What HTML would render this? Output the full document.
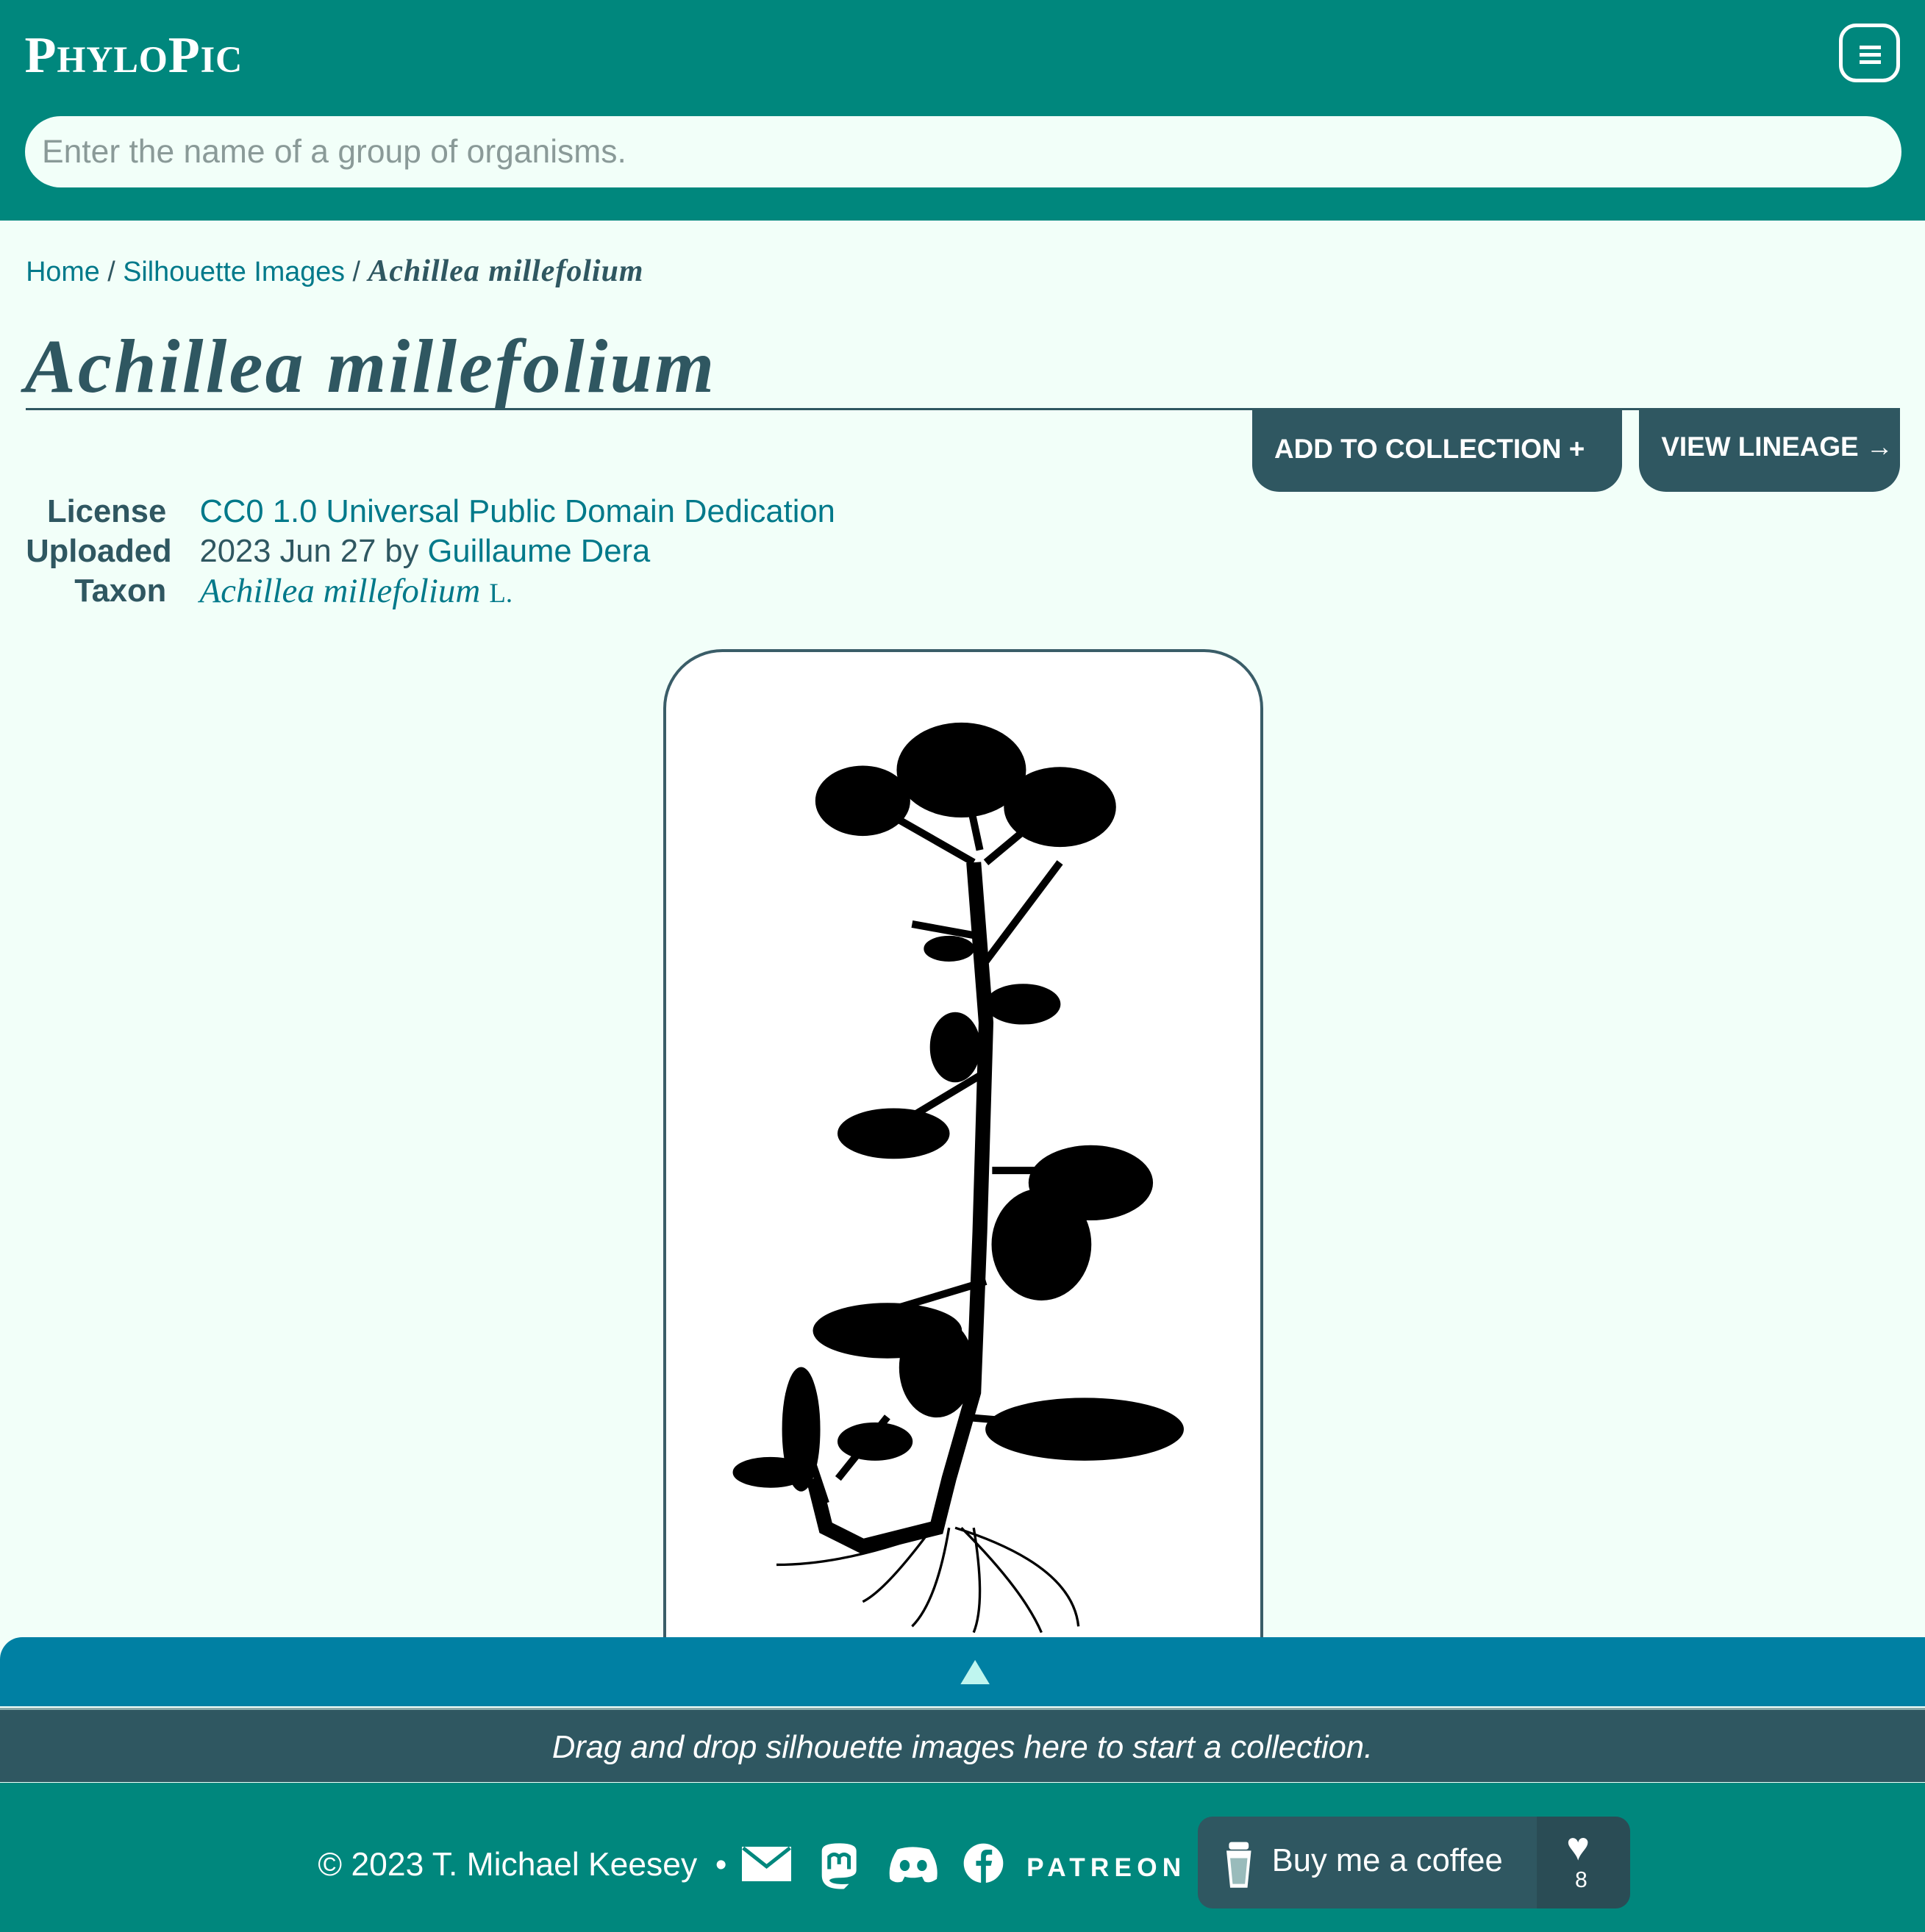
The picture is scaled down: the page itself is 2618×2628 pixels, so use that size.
<!DOCTYPE html>
<html><head><meta charset="utf-8"><style>
html,body{margin:0;padding:0}
body{width:1562px;height:1568px;zoom:1.67606;background:#f2fff9;font-family:"Liberation Sans",sans-serif;position:relative;overflow:hidden}
.hdr{position:absolute;left:0;top:0;width:1562px;height:179px;background:#00877d}
.logo{position:absolute;left:20px;top:21px;color:#fff;font-family:"Liberation Serif",serif;font-weight:bold;font-size:42px;letter-spacing:0.5px}
.logo small{font-size:30px}
.menu{position:absolute;left:1492px;top:19px;width:50px;height:48px;border:3px solid #fff;border-radius:14px;box-sizing:border-box}
.menu i{position:absolute;left:14px;width:17px;height:3px;background:#fff}
.search{position:absolute;left:20px;top:94px;width:1523px;height:58px;background:#f2fff9;border-radius:29px;color:#8a9a98;font-size:26.5px;line-height:58px;padding-left:14px;box-sizing:border-box}
a{color:#00798a;text-decoration:none}
.bc{position:absolute;left:21px;top:206px;font-size:22.5px;color:#2f5761}
.serif{font-family:"Liberation Serif",serif;font-style:italic;font-weight:bold;font-size:25px;letter-spacing:0.6px}
h1{position:absolute;left:20px;top:262px;margin:0;font-family:"Liberation Serif",serif;font-style:italic;font-weight:bold;font-size:62px;letter-spacing:1.8px;color:#2f5761}
.rule{position:absolute;left:21px;top:331px;width:1521px;height:2px;background:#2f5761}
.btn{position:absolute;top:333px;height:66px;background:#2f5761;color:#fff;font-weight:bold;font-size:22px;border-radius:0 0 22px 22px;box-sizing:border-box}
.meta{position:absolute;top:400px;font-size:26px;line-height:32px;color:#2f5761}
.card{position:absolute;left:538px;top:527px;width:487px;height:802px;border:2.5px solid #3a5d68;border-bottom:none;border-radius:48px 48px 0 0;background:#fff;box-sizing:border-box}
.bar{position:absolute;left:0;top:1329px;width:1562px;height:56px;background:#0080a3;border-radius:18px 0 0 0}
.drop{position:absolute;left:0;top:1386px;width:1562px;height:60px;background:#2f5761;color:#fff;font-style:italic;font-size:26px;text-align:center;line-height:62px;border-top:2px solid #8aa;box-sizing:border-box}
.foot{position:absolute;left:0;top:1447px;width:1562px;height:121px;background:#00877d;color:#fff}
</style></head><body>
<div class="hdr">
<div class="logo">P<small>HYLO</small>P<small>IC</small></div>
<div class="menu"><i style="top:15px"></i><i style="top:21px"></i><i style="top:27px"></i></div>
<div class="search">Enter the name of a group of organisms.</div>
</div>
<div class="bc"><a href="#">Home</a> / <a href="#">Silhouette Images</a> / <span class="serif">Achillea millefolium</span></div>
<h1>Achillea millefolium</h1>
<div class="rule"></div>
<div class="btn" style="left:1016px;width:300px;padding:19px 0 0 18px">ADD TO COLLECTION +</div>
<div class="btn" style="left:1330px;width:212px;padding:17px 0 0 18px">VIEW LINEAGE →</div>
<div class="meta" style="left:21px;width:114px;text-align:right;font-weight:bold">License<br>Uploaded<br>Taxon</div>
<div class="meta" style="left:162px"><a href="#">CC0 1.0 Universal Public Domain Dedication</a><br>2023 Jun 27 by <a href="#">Guillaume Dera</a><br><a href="#" style="font-family:'Liberation Serif',serif;font-style:italic;font-size:28px">Achillea millefolium</a> <span style="font-family:'Liberation Serif',serif;font-size:22px;color:#00798a">L.</span></div>
<div class="card"></div>
<svg style="position:absolute;left:590px;top:580px" width="390" height="750" viewBox="590 580 390 750">
<g fill="#000" stroke="#000">
<path d="M790 700 L800 830 L795 1000 L790 1130 L770 1200 L760 1240 L700 1255 L670 1240 L660 1200" fill="none" stroke-width="12"/>
<path d="M790 700 L720 660 M795 690 L780 620 M800 700 L860 650 M800 780 L860 700 M795 760 L740 750 M800 870 L700 930 M805 950 L900 950 M800 1040 L700 1070 M780 1150 L900 1160 M670 1220 L640 1130 M680 1200 L720 1150" stroke-width="6" fill="none"/>
<ellipse cx="700" cy="650" rx="38" ry="28"/><ellipse cx="780" cy="625" rx="52" ry="38"/><ellipse cx="860" cy="655" rx="45" ry="32"/>
<ellipse cx="830" cy="815" rx="30" ry="16"/><ellipse cx="725" cy="920" rx="45" ry="20"/><ellipse cx="775" cy="850" rx="20" ry="28"/>
<ellipse cx="885" cy="960" rx="50" ry="30"/><ellipse cx="845" cy="1010" rx="40" ry="45"/><ellipse cx="720" cy="1080" rx="60" ry="22"/>
<ellipse cx="760" cy="1110" rx="30" ry="40"/><ellipse cx="880" cy="1160" rx="80" ry="25"/><ellipse cx="650" cy="1160" rx="15" ry="50"/>
<ellipse cx="625" cy="1195" rx="30" ry="12"/><ellipse cx="710" cy="1170" rx="30" ry="15"/><ellipse cx="770" cy="770" rx="20" ry="10"/>
<path d="M760 1235 Q720 1290 700 1300 M770 1240 Q760 1300 740 1320 M780 1240 Q830 1290 845 1325 M775 1240 Q870 1270 875 1320 M765 1240 Q690 1270 630 1270 M790 1240 Q800 1300 790 1325" fill="none" stroke-width="2"/>
</g></svg>
<div class="bar"><svg style="position:absolute;left:779px;top:18px" width="24" height="20"><polygon points="12,0 24,20 0,20" fill="#bff5ef"/></svg></div>
<div class="drop">Drag and drop silhouette images here to start a collection.</div>
<div class="foot">
<div style="position:absolute;left:258px;top:52px;font-size:26.5px">© 2023 T. Michael Keesey&nbsp; •</div>
<svg style="position:absolute;left:602px;top:52px" width="40" height="28"><rect width="40" height="28" fill="#fff"/><path d="M1 1 L20 16 L39 1" fill="none" stroke="#00877d" stroke-width="3"/></svg>
<svg style="position:absolute;left:663px;top:47px" width="36" height="40"><path d="M4 8 Q4 2 18 2 Q32 2 32 8 L32 24 Q32 30 18 30 Q12 30 10 32 Q12 36 26 35 L22 39 Q4 40 4 28Z" fill="#fff"/><path d="M10 23 V13 Q14 9 18 13 Q22 9 26 13 V23 M18 13 V19" stroke="#00877d" stroke-width="3" fill="none"/></svg>
<svg style="position:absolute;left:720px;top:50px" width="42" height="32"><path d="M8 4 Q20 0 34 4 Q42 16 40 28 Q34 32 30 30 L28 26 Q20 28 14 26 L12 30 Q6 32 2 28 Q0 16 8 4Z" fill="#fff"/><ellipse cx="14" cy="17" rx="4" ry="4.5" fill="#00877d"/><ellipse cx="28" cy="17" rx="4" ry="4.5" fill="#00877d"/></svg>
<svg style="position:absolute;left:781px;top:48px" width="34" height="34"><circle cx="17" cy="17" r="16" fill="#fff"/><path d="M19 34 V19 H23 L24 15 H19 V12 Q19 10 21 10 H24 V6 H20 Q15 6 15 11 V15 H11 V19 H15 V34Z" fill="#00877d"/></svg>
<div style="position:absolute;left:833px;top:57px;font-size:21px;font-weight:bold;letter-spacing:4.3px">PATREON</div>
<div style="position:absolute;left:972px;top:27px;width:351px;height:75px;background:#2f5761;border-radius:12px;overflow:hidden">
<div style="position:absolute;left:275px;top:0;width:76px;height:75px;background:#2a4c55"></div>
<svg style="position:absolute;left:20px;top:20px" width="26" height="40"><path d="M3 8 H23 L20 38 H6Z" fill="#fff"/><path d="M6 14 H20 L18 35 H8Z" fill="#9bb"/><rect x="5" y="1" width="16" height="6" rx="2" fill="#fff"/></svg>
<div style="position:absolute;left:60px;top:22px;font-size:26px;color:#fff">Buy me a coffee</div>
<div style="position:absolute;left:299px;top:6px;font-size:32px;color:#fff">♥</div>
<div style="position:absolute;left:306px;top:42px;font-size:18px;color:#fff">8</div>
</div>
</div>
</body></html>
